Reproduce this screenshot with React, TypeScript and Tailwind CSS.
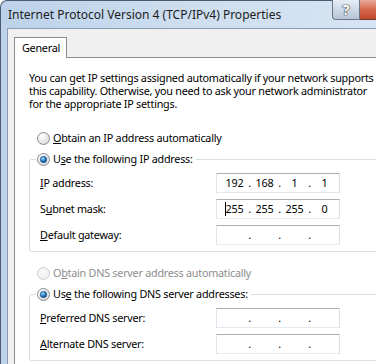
import type { ReactNode } from 'react';

function Radio({ checked = false, disabled = false }: { checked?: boolean; disabled?: boolean }) {
  const ring = disabled ? '#c9cbcd' : '#8a8d91';
  const fill = `rf${checked ? 'c' : 'u'}${disabled ? 'd' : ''}`;
  return (
    <svg width="13" height="13" viewBox="0 0 13 13" className="shrink-0">
      <defs>
        <radialGradient id={fill} cx="0.35" cy="0.3" r="0.8">
          <stop offset="0" stopColor={disabled ? '#fafafa' : '#ffffff'} />
          <stop offset="1" stopColor={disabled ? '#eeeeee' : '#d6d8da'} />
        </radialGradient>
        <radialGradient id="rdot" cx="0.4" cy="0.35" r="0.7">
          <stop offset="0" stopColor="#9fdcfb" />
          <stop offset="0.55" stopColor="#2a7bc4" />
          <stop offset="1" stopColor="#0d3f78" />
        </radialGradient>
      </defs>
      <circle cx="6.5" cy="6.5" r="6" fill={`url(#${fill})`} stroke={ring} />
      {checked && <circle cx="6.5" cy="6.5" r="3.2" fill="url(#rdot)" stroke="#1b4f86" strokeWidth="0.6" />}
    </svg>
  );
}

function IpBox({ parts, caret = false }: { parts: string[]; caret?: boolean }) {
  return (
    <div className="w-[124px] h-[20px] bg-white border border-t-[#abadb3] border-l-[#e2e3ea] border-r-[#dbdfe6] border-b-[#e3e9ef] flex items-center pl-[6px]">
      {parts.map((p, i) => (
        <div key={i} className="flex items-center">
          <span className="relative w-[23px] text-center">
            {caret && i === 0 && <span className="absolute left-[2px] top-[1px] w-px h-[14px] bg-black" />}
            {p}
          </span>
          {i < 3 && <span className="w-[7px] text-center">.</span>}
        </div>
      ))}
    </div>
  );
}

function Row({ label, children }: { label: ReactNode; children: ReactNode }) {
  return (
    <div className="flex items-center h-[20px]">
      <span className="w-[176px]">{label}</span>
      {children}
    </div>
  );
}

function Group({ legend, children }: { legend: ReactNode; children: ReactNode }) {
  return (
    <div className="relative mt-[13px] w-[360px] border border-[#d5dfe5] rounded-[3px] pt-[13px] pb-[6px] pl-[10px] flex flex-col gap-[6px]">
      <div className="absolute -top-[9px] left-[6px] h-[16px] bg-white pl-px pr-[3px] flex items-center gap-[3px]">
        <Radio checked />
        <span>{legend}</span>
      </div>
      {children}
    </div>
  );
}

const empty = ['', '', '', ''];

export default function App() {
  return (
    <div className="w-[376px] h-[364px] overflow-hidden bg-white">
      <div className="w-[410px] h-[370px] flex flex-col rounded-tl-[7px] border-l border-t border-[#4e5b6e] bg-gradient-to-r from-[#bcd2ea] via-[#cfdff0] to-[#d7e5f3] text-black font-['Segoe_UI','Noto_Sans',sans-serif]">
        {/* Title bar */}
        <div className="h-[27px] flex shrink-0">
          <div className="flex-1 pl-[7px] pt-[6px] leading-[16px] text-[12px] text-[#1b1b1b]">Internet Protocol Version 4 (TCP/IPv4) Properties</div>
          <div className="flex items-start -mt-px">
            <div className="w-[28px] h-[20px] rounded-bl-[4px] border border-t-0 border-[#6b7586] bg-gradient-to-b from-[#e6eef7] via-[#cdd9e6] to-[#b6c6d8] flex items-center justify-center text-[15px] font-bold leading-none text-white [text-shadow:0_0_1px_#333,0_0_1px_#333,0_0_1px_#333]">
              ?
            </div>
            <div className="w-[50px] h-[20px] border border-t-0 border-l-0 border-[#6b3a34] bg-gradient-to-b from-[#e9a99b] via-[#d3664d] to-[#c04a2c]" />
          </div>
        </div>

        {/* Frame + client */}
        <div className="flex-1 flex pl-[6px] text-[10.8px] tracking-[-0.25px]">
          <div className="flex-1 border-l border-t border-[#8d9cb0] bg-[#f0f0f0] pl-[6px] pt-[8px] flex flex-col">
            <div className="relative z-10 -mb-px w-[53px] h-[21px] border border-b-0 border-[#898c95] bg-white pl-[7px] flex items-center">
              General
            </div>
            <div className="flex-1 bg-white border-l border-t border-[#898c95] pl-[14px] pt-[13px] flex flex-col whitespace-nowrap">
              <p className="leading-[13px]">
                You can get IP settings assigned automatically if your network supports
                <br />
                this capability. Otherwise, you need to ask your network administrator
                <br />
                for the appropriate IP settings.
              </p>

              <div className="mt-[20px] h-[16px] pl-[8px] flex items-center gap-[3px]">
                <Radio />
                <span>
                  <u>O</u>btain an IP address automatically
                </span>
              </div>

              <Group legend={<>U<u>s</u>e the following IP address:</>}>
                <Row label={<><u>I</u>P address:</>}>
                  <IpBox parts={['192', '168', '1', '1']} />
                </Row>
                <Row label={<>S<u>u</u>bnet mask:</>}>
                  <IpBox parts={['255', '255', '255', '0']} caret />
                </Row>
                <Row label={<><u>D</u>efault gateway:</>}>
                  <IpBox parts={empty} />
                </Row>
              </Group>

              <div className="mt-[13px] h-[16px] pl-[8px] flex items-center gap-[3px] text-[#8d8d8d]">
                <Radio disabled />
                <span>
                  O<u>b</u>tain DNS server address automatically
                </span>
              </div>

              <Group legend={<>Us<u>e</u> the following DNS server addresses:</>}>
                <Row label={<><u>P</u>referred DNS server:</>}>
                  <IpBox parts={empty} />
                </Row>
                <Row label={<><u>A</u>lternate DNS server:</>}>
                  <IpBox parts={empty} />
                </Row>
              </Group>
            </div>
          </div>
        </div>
      </div>
    </div>
  );
}
